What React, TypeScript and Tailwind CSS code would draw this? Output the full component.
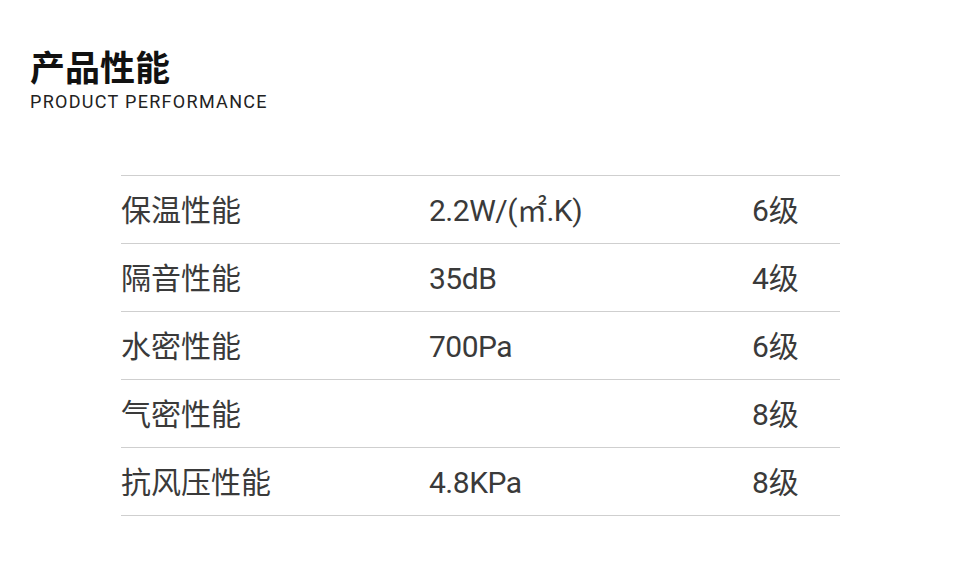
const rows = [
  { name: '保温性能', value: '2.2W/(㎡.K)', level: '6级' },
  { name: '隔音性能', value: '35dB', level: '4级' },
  { name: '水密性能', value: '700Pa', level: '6级' },
  { name: '气密性能', value: '', level: '8级' },
  { name: '抗风压性能', value: '4.8KPa', level: '8级' },
]

const App = () => {
  return (
    <div
      className="h-[585px] w-[960px] bg-white text-[#333]"
      style={{ fontFamily: 'Roboto, "Noto Sans CJK SC", sans-serif' }}
    >
      <div className="px-[30px] pt-[48px]">
        <h1 className="text-[35px] font-bold leading-[44px] text-[#111]">产品性能</h1>
        <p className="text-[18px] leading-[20px] tracking-[1.3px] text-[#222]">PRODUCT PERFORMANCE</p>
      </div>
      <div className="ml-[121px] mt-[63px] w-[719px] border-t border-[#cfcfcf]">
        {rows.map((row) => (
          <div
            key={row.name}
            className="flex h-[68px] items-center border-b border-[#cfcfcf] pt-[1px] text-[30px] text-[#3a3a3a]"
          >
            <div className="w-[308px]">{row.name}</div>
            <div className="w-[323px] tracking-[-0.5px]">{row.value}</div>
            <div>{row.level}</div>
          </div>
        ))}
      </div>
    </div>
  )
}

export default App
